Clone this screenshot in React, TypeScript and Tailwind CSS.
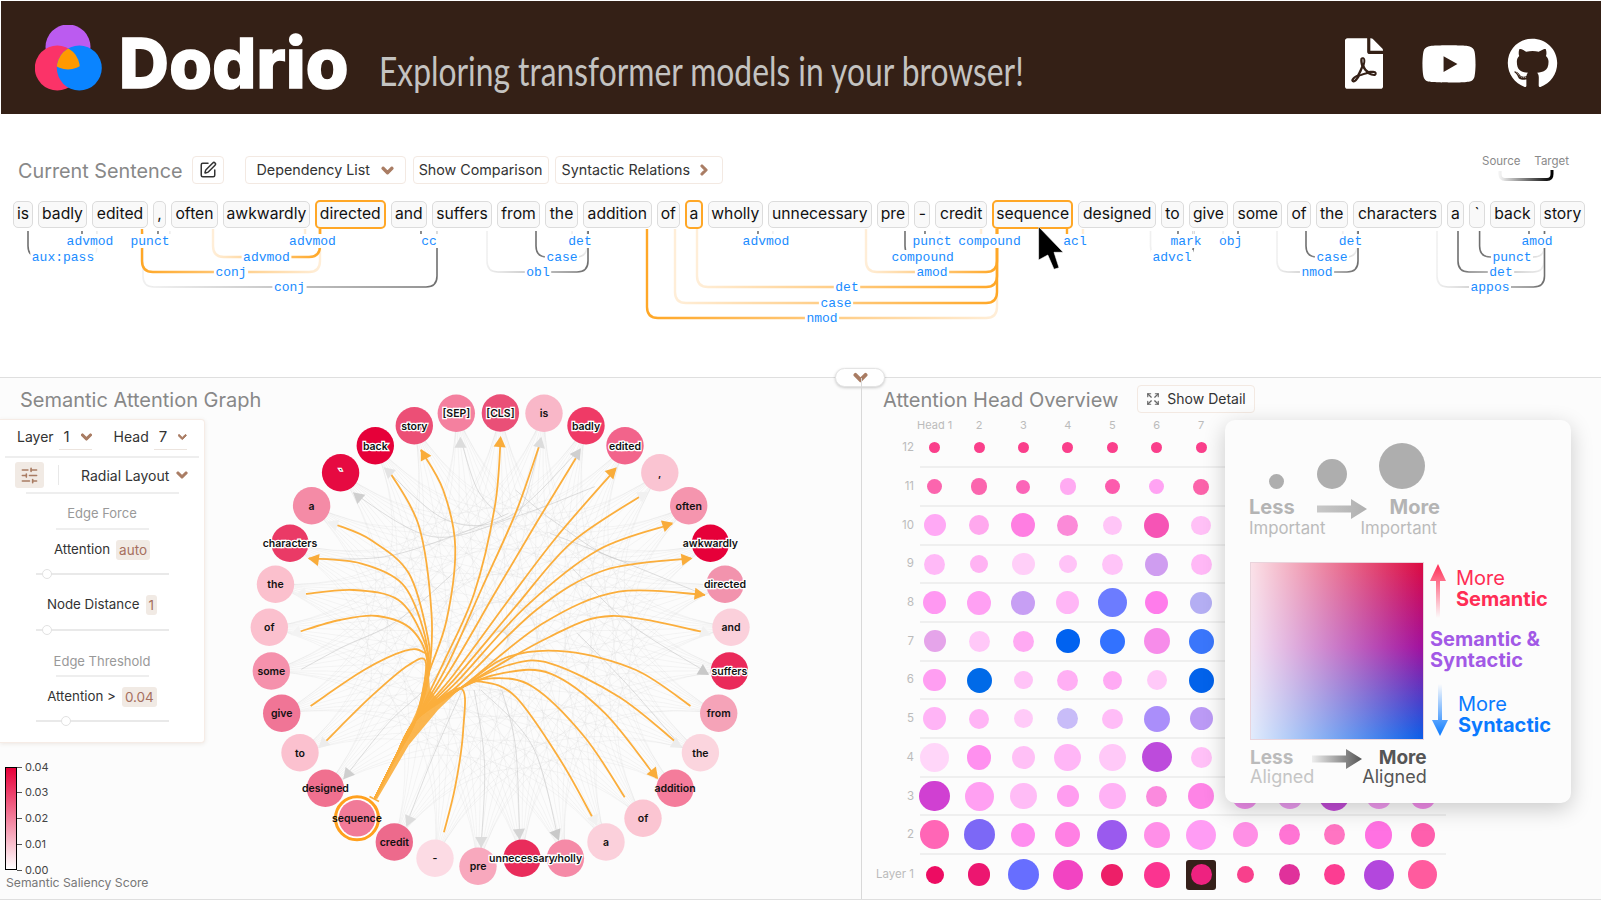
import { ReactNode } from 'react';
import { FaFilePdf, FaYoutube, FaGithub, FaChevronDown, FaChevronRight } from 'react-icons/fa';
import { SquarePen, SlidersHorizontal, Expand } from 'lucide-react';

type Pt = [number, number];

// text, box width, selected
const tokens: [string, number, boolean?][] = [
    ['is', 20], ['badly', 49], ['edited', 56], [',', 13], ['often', 47], ['awkwardly', 87], ['directed', 70.5, true], ['and', 36.5], ['suffers', 60], ['from', 43],
    ['the', 33], ['addition', 68.6], ['of', 23.4], ['a', 17.6, true], ['wholly', 55.4], ['unnecessary', 103.6], ['pre', 32.8], ['-', 16], ['credit', 51.6], ['sequence', 81.5, true],
    ['designed', 77.5], ['to', 23], ['give', 39], ['some', 49.5], ['of', 23.1], ['the', 32.4], ['characters', 89], ['a', 17], ['`', 16], ['back', 45], ['story', 45],
];

// x1, x2, level y, label, label centre, kind, dark end
type Arc = [number, number, number, string, number, 'o' | 'g', 'l' | 'r'];
const arcs: Arc[] = [
    [28, 97, 257, 'aux:pass', 63, 'g', 'l'],
    [82, 97, 241, 'advmod', 90, 'g', 'l'],
    [158, 170, 241, 'punct', 150, 'g', 'l'],
    [143, 437, 287, 'conj', 289.5, 'g', 'r'],
    [142, 320, 272, 'conj', 231, 'o', 'l'],
    [213, 320, 257, 'advmod', 266.5, 'o', 'r'],
    [305, 320, 241, 'advmod', 312.5, 'o', 'r'],
    [421, 437, 241, 'cc', 429, 'g', 'l'],
    [572, 588, 241, 'det', 580, 'g', 'r'],
    [536, 587, 257, 'case', 562, 'g', 'l'],
    [487, 588, 272, 'obl', 538, 'g', 'r'],
    [647, 997, 318, 'nmod', 822, 'o', 'l'],
    [675, 997, 303, 'case', 836, 'o', 'r'],
    [697, 997, 287, 'det', 847, 'o', 'r'],
    [758, 773, 241, 'advmod', 766, 'g', 'l'],
    [866, 997, 272, 'amod', 932, 'o', 'r'],
    [905, 940, 257, 'compound', 922.6, 'g', 'l'],
    [925, 940, 241, 'punct', 932, 'g', 'l'],
    [981, 997, 241, 'compound', 989.5, 'o', 'r'],
    [1067, 1083, 241, 'acl', 1075, 'o', 'l'],
    [1150.5, 1193.5, 257, 'advcl', 1172, 'g', 'r'],
    [1178, 1193.5, 241, 'mark', 1186, 'g', 'l'],
    [1223, 1238, 241, 'obj', 1230.7, 'g', 'r'],
    [1342.7, 1358, 241, 'det', 1350.5, 'g', 'r'],
    [1306, 1357, 257, 'case', 1332, 'g', 'l'],
    [1277, 1358, 272, 'nmod', 1317, 'g', 'r'],
    [1529, 1544.5, 241, 'amod', 1537, 'g', 'l'],
    [1479.6, 1544.5, 257, 'punct', 1512, 'g', 'l'],
    [1458, 1544, 272, 'det', 1501, 'g', 'l'],
    [1437, 1544.5, 287, 'appos', 1490, 'g', 'r'],
];

const DependencyArcs = () => (
    <svg viewBox="0 228 1601 100" className="block w-[1601px] h-[100px] overflow-visible">
        <defs>
            {arcs.map((a, i) => {
                const dark = a[5] === 'o' ? '#ffa726' : '#6f6f6f';
                const light = a[5] === 'o' ? '#ffeed8' : '#f0f0f0';
                return (
                    <linearGradient key={i} id={`arc${i}`} gradientUnits="userSpaceOnUse" x1={a[0]} x2={a[1]} y1="0" y2="0">
                        <stop offset="0" stopColor={a[6] === 'l' ? dark : light} />
                        <stop offset="1" stopColor={a[6] === 'l' ? light : dark} />
                    </linearGradient>
                );
            })}
        </defs>
        {arcs.map((a, i) => {
            const r = a[2] === 241 ? 5 : 11;
            const top = a[5] === 'o' ? 229 : 231;
            return (
                <path
                    key={i}
                    d={`M${a[0]} ${top}V${a[2] - r}Q${a[0]} ${a[2]} ${a[0] + r} ${a[2]}H${a[1] - r}Q${a[1]} ${a[2]} ${a[1]} ${a[2] - r}V${top}`}
                    fill="none"
                    stroke={`url(#arc${i})`}
                    strokeWidth={a[5] === 'o' ? 2.4 : 1.6}
                />
            );
        })}
        {arcs.map((a, i) => {
            const w = a[3].length * 7.8 + 3;
            return (
                <g key={i}>
                    <rect x={a[4] - w / 2} y={a[2] - 7} width={w} height={14} fill="#fff" />
                    <text x={a[4]} y={a[2] + 4} textAnchor="middle" fontSize="13" fontFamily="'Liberation Mono', monospace" fill="#1a8cff">{a[3]}</text>
                </g>
            );
        })}
        <path d="M1038.6 226.7V260L1047.8 255L1054 269.3L1059 267.7L1054 252.3H1063.2Z" fill="#000" stroke="#fff" strokeWidth="0.6" />
    </svg>
);

// graph coordinates are read off a 2.9 x 3 crop, zp maps them to the page
const zp = (p: Pt): Pt => [240 + p[0] / 2.9037, 380 + p[1] / 3];

const smooth = (raw: Pt[]) => {
    const pts = raw.map(zp);
    let d = `M${pts[0][0].toFixed(1)} ${pts[0][1].toFixed(1)}`;
    for (let i = 0; i < pts.length - 1; i++) {
        const p0 = pts[i - 1] || pts[i];
        const p1 = pts[i];
        const p2 = pts[i + 1];
        const p3 = pts[i + 2] || p2;
        d += `C${(p1[0] + (p2[0] - p0[0]) / 6).toFixed(1)} ${(p1[1] + (p2[1] - p0[1]) / 6).toFixed(1)} ${(p2[0] - (p3[0] - p1[0]) / 6).toFixed(1)} ${(p2[1] - (p3[1] - p1[1]) / 6).toFixed(1)} ${p2[0].toFixed(1)} ${p2[1].toFixed(1)}`;
    }
    return d;
};

const tip = (from: Pt, to: Pt, size = 11) => {
    const a = zp(from);
    const b = zp(to);
    const len = Math.hypot(b[0] - a[0], b[1] - a[1]) || 1;
    const ux = (b[0] - a[0]) / len;
    const uy = (b[1] - a[1]) / len;
    const bx = b[0] - ux * size;
    const by = b[1] - uy * size;
    return `${b[0].toFixed(1)},${b[1].toFixed(1)} ${(bx - uy * size * 0.55).toFixed(1)},${(by + ux * size * 0.55).toFixed(1)} ${(bx + uy * size * 0.55).toFixed(1)},${(by - ux * size * 0.55).toFixed(1)}`;
};

const nodes: [string, number, number, string, boolean?][] = [
    ['[SEP]', 456.3, 413.3, '#f4809f', true], ['[CLS]', 500.4, 413, '#ea4f77', true], ['is', 544, 413.3, '#f9b7c8'],
    ['badly', 586, 425.7, '#ef3a66', true], ['edited', 625, 445.7, '#f2648b', true], [',', 659.8, 472.7, '#fac4d2'],
    ['often', 688.7, 505.7, '#f595ae'], ['awkwardly', 710.4, 543.3, '#e60039', true], ['directed', 725, 584.3, '#f293ad', true],
    ['and', 731, 627.3, '#fbd0db'], ['suffers', 729.4, 671, '#ea2a5a', true], ['from', 718.7, 713.3, '#f5a3b8'],
    ['the', 700.4, 752.7, '#fbd5de'], ['addition', 675, 788.3, '#f47c9b'], ['of', 643, 818.3, '#fbc5d2'],
    ['a', 606, 842, '#fbd0db'], ['wholly', 565.4, 858.3, '#f58aa7', true], ['unnecessary', 522, 858.3, '#e92c5b', true],
    ['pre', 478, 866.3, '#f8a8bd'], ['-', 435, 858.3, '#fcdbe4'], ['credit', 394.3, 842, '#ed6a8c'],
    ['designed', 325.4, 788.3, '#f0708f'], ['to', 300, 752.7, '#fbc1cf'], ['give', 281.7, 713.3, '#f07596'],
    ['some', 271.3, 671, '#f591ac'], ['of', 269.3, 627.3, '#fbc0ce'], ['the', 275.5, 584.3, '#fbc0cd'],
    ['characters', 290, 543.3, '#ea3a66', true], ['a', 311.6, 505.7, '#f48ba6'], ['`', 340.6, 472.7, '#e60a41', true],
    ['back', 375.3, 445.7, '#e60039', true], ['story', 414.3, 425.7, '#ec4f76', true],
];

const S: Pt = [392, 1255];
const T1: Pt = [450, 1135];
const T2: Pt = [510, 1020];
const L: Pt = [548, 880];
const R: Pt = [640, 925];

const orange: Pt[][] = [
    [S, T1, T2, L, [600, 720], [625, 500], [590, 330], [525, 210]],
    [S, T1, T2, L, [556, 700], [520, 440], [437, 280]],
    [S, T1, T2, L, [545, 770], [490, 580], [380, 480], [282, 435]],
    [S, T1, T2, L, [530, 740], [470, 610], [350, 550], [200, 535]],
    [S, T1, T2, L, [530, 770], [460, 660], [330, 630], [190, 642]],
    [S, T1, T2, [545, 860], [500, 750], [400, 708], [290, 720], [172, 755]],
    [S, T1, T2, [545, 850], [530, 815], [480, 812], [360, 870], [205, 978]],
    [S, T1, T2, [540, 850], [490, 855], [380, 950], [248, 1085]],
    [S, T1, T2, [590, 850], [680, 640], [740, 380], [757, 175]],
    [S, T1, T2, [600, 860], [700, 630], [800, 400], [868, 200]],
    [S, T1, T2, [610, 870], [740, 640], [860, 430], [975, 235]],
    [S, T1, T2, [620, 885], [780, 660], [920, 470], [1090, 268]],
    [S, T1, T2, [625, 895], [800, 680], [960, 490], [1160, 350]],
    [S, T1, T2, [630, 905], [830, 680], [1040, 510], [1255, 432]],
    [S, T1, T2, [635, 915], [860, 690], [1060, 570], [1310, 535]],
    [S, T1, T2, R, [880, 730], [1100, 635], [1350, 645]],
    [S, T1, T2, R, [900, 770], [1080, 708], [1340, 755]],
    [S, T1, T2, R, [780, 830], [950, 815], [1150, 870], [1308, 978]],
    [S, T1, T2, R, [780, 855], [900, 850], [1100, 950], [1262, 1083]],
    [S, T1, T2, R, [760, 880], [900, 880], [1060, 1000], [1210, 1195]],
    [S, T1, T2, R, [730, 895], [850, 920], [1000, 1070], [1117, 1252]],
    [S, T1, T2, R, [700, 905], [800, 950], [930, 1140], [1025, 1315]],
    [S, T1, T2, R, [648, 1050], [625, 1220], [592, 1357]],
];

// arrow heads: tail, tip, colour
const arrows: [Pt, Pt, string][] = [
    [[590, 330], [525, 207], '#f9ac3a'],
    [[745, 300], [757, 168], '#f9ac3a'],
    [[1040, 318], [1094, 262], '#f9ac3a'],
    [[1150, 465], [1258, 428], '#f9ac3a'],
    [[1200, 550], [1314, 535], '#f9ac3a'],
    [[1240, 632], [1352, 645], '#f9ac3a'],
    [[300, 550], [197, 535], '#f9ac3a'],
    [[1130, 1090], [1214, 1197], '#f9ac3a'],
    [[460, 300], [417, 262], '#e4e4e4'],
    [[280, 435], [253, 425], '#f1f1f1'],
    [[400, 400], [328, 337], '#cfcfcf'],
    [[190, 640], [160, 645], '#f3f3f3'],
    [[172, 755], [146, 765], '#f3f3f3'],
    [[248, 1085], [228, 1105], '#ececec'],
    [[640, 290], [640, 170], '#dcdcdc'],
    [[860, 240], [875, 170], '#dcdcdc'],
    [[940, 280], [990, 205], '#cfcfcf'],
    [[1130, 370], [1186, 335], '#f1f1f1'],
    [[1340, 755], [1368, 766], '#f1f1f1'],
    [[1260, 820], [1362, 885], '#c9c9c9'],
    [[1240, 1075], [1284, 1104], '#ececec'],
    [[1020, 1300], [1037, 1338], '#f1f1f1'],
    [[880, 1260], [926, 1382], '#c9c9c9'],
    [[805, 1270], [812, 1380], '#d4d4d4'],
    [[702, 1300], [700, 1404], '#dcdcdc'],
    [[520, 1250], [483, 1340], '#dcdcdc'],
    [[370, 1110], [300, 1198], '#cfcfcf'],
];

const greyLines: Pt[][] = [
    [[330, 340], [560, 470], [800, 410], [1030, 320]],
    [[420, 265], [600, 420], [780, 410], [980, 215]],
    [[640, 175], [690, 330], [760, 410]],
    [[875, 175], [830, 350], [800, 420]],
    [[200, 535], [420, 530], [640, 460], [780, 400]],
    [[1300, 535], [1100, 540], [920, 430], [800, 330]],
    [[1350, 645], [1100, 540], [900, 460]],
    [[1360, 880], [1130, 730], [960, 560]],
    [[178, 868], [300, 800], [460, 720], [640, 560]],
    [[300, 1198], [430, 1030], [560, 900], [680, 700]],
    [[483, 1335], [560, 1130], [650, 920]],
    [[700, 1404], [710, 1150], [680, 930]],
    [[812, 1380], [800, 1100], [760, 930]],
    [[925, 1380], [850, 1100], [700, 930]],
    [[1284, 1104], [1130, 920], [980, 760]],
];

const cx = 500;
const cy = 640;
const allEdges: string[] = [];
nodes.forEach((a, i) => {
    nodes.forEach((b, j) => {
        if (j <= i || j - i < 5 || nodes.length - (j - i) < 5) return;
        if ((i * 7 + j * 13) % 2 !== 0) return;
        const mx = cx + ((a[1] + b[1]) / 2 - cx) * 0.35;
        const my = cy + ((a[2] + b[2]) / 2 - cy) * 0.35;
        allEdges.push(`M${a[1]} ${a[2]}Q${mx.toFixed(1)} ${my.toFixed(1)} ${b[1]} ${b[2]}`);
    });
});

const trunk = [[392, 1255], [470, 1090], [510, 1000], [535, 930], [548, 880], [552, 930], [575, 960], [640, 925], [575, 990], [490, 1095], [398, 1258]]
    .map((p) => zp(p as Pt).map((v) => v.toFixed(1)).join(','))
    .join(' ');

const AttentionGraph = () => (
    <svg viewBox="240 380 540 521" className="block w-[540px] h-[521px] overflow-visible">
        {allEdges.map((d, i) => (
            <path key={i} d={d} fill="none" stroke="#c4c4c4" strokeWidth="0.7" opacity="0.22" />
        ))}
        {greyLines.map((p, i) => (
            <path key={i} d={smooth(p)} fill="none" stroke="#c8c8c8" strokeWidth="1" opacity="0.6" />
        ))}
        {orange.map((p, i) => (
            <path key={i} d={smooth(p)} fill="none" stroke="#fbae3c" strokeWidth={1.8} />
        ))}
        <polygon points={trunk} fill="#fbae3c" opacity="0.9" />
        {arrows.map((a, i) => (
            <polygon key={i} points={tip(a[0], a[1])} fill={a[2]} />
        ))}
        <path d="M369.5 796.5L379 801.5" stroke="#fbae3c" strokeWidth="1.5" />
        {nodes.map((n) => (
            <circle key={n[0] + n[1]} cx={n[1]} cy={n[2]} r="18.7" fill={n[3]} />
        ))}
        <circle cx="357" cy="818.3" r="21.5" fill="#fff" stroke="#ffa01e" strokeWidth="3" />
        <circle cx="357" cy="818.3" r="18.3" fill="#f17a98" />
        {nodes.map((n) => (
            <text
                key={n[0] + n[1]}
                x={n[1]}
                y={n[2] + 4}
                textAnchor="middle"
                fontSize="10.5"
                fontWeight="600"
                fontFamily="Inter, sans-serif"
                fill="#111"
                stroke={n[4] ? '#fff' : 'none'}
                strokeWidth={n[4] ? 2.5 : 0}
                paintOrder="stroke"
            >
                {n[0]}
            </text>
        ))}
        <text x="357" y="822.3" textAnchor="middle" fontSize="10.5" fontWeight="600" fontFamily="Inter, sans-serif" fill="#111">sequence</text>
    </svg>
);

const Logo = () => (
    <svg viewBox="0 0 80 80" className="w-[80px] h-[80px] shrink-0">
        <defs>
            <clipPath id="cp"><circle cx="33" cy="22" r="22.5" /></clipPath>
            <clipPath id="cr"><circle cx="22.3" cy="43" r="22.5" /></clipPath>
        </defs>
        <circle cx="33" cy="22" r="22.5" fill="#bb5bf0" />
        <circle cx="22.3" cy="43" r="22.5" fill="#fb3368" />
        <circle cx="44.3" cy="43" r="22.5" fill="#0a84ff" />
        <g clipPath="url(#cp)">
            <g clipPath="url(#cr)">
                <circle cx="44.3" cy="43" r="22.5" fill="#ff9900" />
            </g>
        </g>
    </svg>
);

const Header = () => (
    <header className="mt-px ml-px h-[113px] bg-[#342016] flex items-center text-white">
        <div className="ml-[34px] translate-y-[7px]"><Logo /></div>
        <div className="ml-[4px] translate-y-[6px] font-['Inter',sans-serif] font-extrabold text-[69px] leading-none tracking-[0.3px] [-webkit-text-stroke:1.5px_white]">Dodrio</div>
        <div className="ml-[30px] translate-y-[13px] origin-left scale-x-[0.775] font-['Lato',sans-serif] text-[41px] leading-none text-[#c4c3c1] whitespace-nowrap">Exploring transformer models in your browser!</div>
        <div className="ml-auto flex items-center mr-[43px] translate-y-[6px]">
            <FaFilePdf className="w-[38px] h-[51px]" />
            <FaYoutube className="w-[56px] h-[56px] ml-[38px]" />
            <FaGithub className="w-[51px] h-[51px] ml-[30px]" />
        </div>
    </header>
);

const Chevron = ({ size, className }: { size: number; className?: string }) => (
    <FaChevronDown size={size} strokeWidth={50} className={`text-[#a97c63] ${className || ''}`} />
);

const TanButton = ({ children, className }: { children: ReactNode; className?: string }) => (
    <div className={`h-[28px] flex items-center border border-[#f3e9e2] rounded-[4px] text-[14.3px] text-[#333] whitespace-nowrap ${className || ''}`}>{children}</div>
);

const SentencePanel = () => (
    <section className="h-[263px] bg-white">
        <div className="h-[87px] flex items-start pt-[42px] pl-[18px] relative">
            <h2 className="text-[19.8px] leading-[30px] text-[#888] whitespace-nowrap">Current Sentence</h2>
            <TanButton className="ml-[9px] w-[32px] justify-center text-[#333]"><SquarePen size={18} /></TanButton>
            <TanButton className="ml-[21px] w-[161px] pl-[11px]">Dependency List<Chevron size={13} className="ml-[11px]" /></TanButton>
            <TanButton className="ml-[7px] w-[136px] justify-center">Show Comparison</TanButton>
            <TanButton className="ml-[6px] w-[168px] pl-[6px]">Syntactic Relations<FaChevronRight className="ml-[8px] text-[#a97c63]" size={12} strokeWidth={50} /></TanButton>
            <div className="ml-auto mr-[32px] mt-0 w-[87px] text-[11.5px] text-[#8a8a8a]">
                <div className="flex justify-between -mt-[3px]"><span>Source</span><span>Target</span></div>
                <svg viewBox="0 0 60 12" className="block ml-[14px] w-[60px] h-[12px]">
                    <defs><linearGradient id="srcTgt" x1="0" x2="1" y1="0" y2="0"><stop offset="0" stopColor="#f2f2f2" /><stop offset="1" stopColor="#000" /></linearGradient></defs>
                    <path d="M4 1V4Q4 9.5 9 9.5H51Q56 9.5 56 4V0" fill="none" stroke="url(#srcTgt)" strokeWidth="3" />
                </svg>
            </div>
        </div>
        <div className="flex items-center gap-[5px] ml-[13px] h-[27px]">
            {tokens.map((t, i) => (
                <div
                    key={i}
                    style={{ width: t[1] }}
                    className={t[2]
                        ? 'h-[29px] pb-px flex items-center justify-center shrink-0 rounded-[5px] border-2 border-[#ffa726] bg-[#f9f9f9] text-[15.7px] text-[#111]'
                        : 'h-[27px] pb-px flex items-center justify-center shrink-0 rounded-[5px] border border-[#dcdcdc] bg-[#f9f9f9] text-[15.7px] text-[#111]'}
                >
                    {t[0]}
                </div>
            ))}
        </div>
        <DependencyArcs />
    </section>
);

const Slider = ({ thumb }: { thumb: number }) => (
    <div className="relative ml-[36px] w-[133px] h-[2px] bg-[#e9e9e9]">
        <div className="absolute -top-[4px] w-[10px] h-[10px] rounded-full bg-white border border-[#e2e2e2]" style={{ left: thumb }} />
    </div>
);

const Tag = ({ children }: { children: ReactNode }) => (
    <span className="ml-[6px] px-[3px] h-[20px] flex items-center rounded-[3px] bg-[#f1eae4] text-[#a66f5e] text-[13.5px]">{children}</span>
);

const ControlPanel = () => (
    <div className="w-[205px] h-[324px] bg-white border border-l-0 border-[#f6ece6] rounded-r-[4px] shadow-[0_1px_4px_rgba(120,80,50,0.12)] text-[13.3px] text-[#333]">
        <div className="h-[36px] flex items-center pl-[17px] pb-[4px] text-[14px]">
            <span>Layer</span>
            <span className="ml-[5px] w-[33px] h-[25px] pl-[5px] flex items-center border-b border-[#ece4de] mt-[3px] text-[15px]">1<Chevron size={12} className="ml-[11px]" /></span>
            <span className="ml-[22px]">Head</span>
            <span className="ml-[5px] w-[33px] h-[25px] pl-[5px] flex items-center border-b border-[#ece4de] mt-[3px] text-[15px]">7<Chevron size={12} className="ml-[11px]" /></span>
        </div>
        <div className="mx-[5px] h-[2px] bg-[#eeeeee]" />
        <div className="h-[34px] flex items-center pl-[15px] text-[14px]">
            <span className="w-[29px] h-[26px] flex items-center justify-center bg-[#f1eae4] rounded-[3px] text-[#a97c63]"><SlidersHorizontal size={19} /></span>
            <span className="ml-[14px] w-px h-[20px] bg-[#e8e8e8]" />
            <span className="ml-[22px]">Radial Layout</span>
            <Chevron size={12} className="ml-[7px]" />
        </div>
        <div className="mx-[26px] w-[153px] h-[2px] bg-[#eeeeee]" />
        <div className="h-[34px] pt-[5px] flex items-center justify-center text-[#999] text-[13px]">Edge Force</div>
        <div className="ml-[56px] w-[93px] h-[2px] bg-[#eeeeee]" />
        <div className="mt-[10px] flex items-center justify-center h-[20px]"><span>Attention</span><Tag>auto</Tag></div>
        <div className="mt-[13px]"><Slider thumb={6} /></div>
        <div className="mt-[20px] flex items-center justify-center h-[20px]"><span>Node Distance</span><Tag>1</Tag></div>
        <div className="mt-[14px]"><Slider thumb={6} /></div>
        <div className="mt-[19px] h-[24px] flex items-center justify-center text-[#999] text-[13px]">Edge Threshold</div>
        <div className="mt-px ml-[56px] w-[93px] h-[2px] bg-[#eeeeee]" />
        <div className="mt-[10px] flex items-center justify-center h-[20px]"><span>Attention &gt;</span><Tag>0.04</Tag></div>
        <div className="mt-[13px]"><Slider thumb={25} /></div>
    </div>
);

const SaliencyLegend = () => (
    <div className="mt-[24px] ml-[5px] text-[11px] leading-none text-[#444]">
        <div className="flex">
            <div className="w-[12px] h-[103px] border border-black bg-[linear-gradient(to_bottom,#e60039,#fff)]" />
            <div className="h-[114px] -mt-[5.5px] flex flex-col justify-between">
                {['0.04', '0.03', '0.02', '0.01', '0.00'].map((v) => (
                    <div key={v} className="flex items-center h-[11px]">
                        <span className="w-[5px] h-px bg-[#555] mr-[3px]" />{v}
                    </div>
                ))}
            </div>
        </div>
        <div className="-mt-[1px] ml-px text-[12.2px] leading-[15px] text-[#777] whitespace-nowrap">Semantic Saliency Score</div>
    </div>
);

type Dot = [number, string];
const rows: { label: string; dots: Dot[] }[] = [
    { label: '12', dots: [[11, '#fa3f8b'], [11, '#fa3f8b'], [11, '#fa3f8b'], [11, '#fa3f8b'], [11, '#fa3f8b'], [11, '#fa3f8b'], [11, '#fa3f8b']] },
    { label: '11', dots: [[15, '#fb65ae'], [16.7, '#fb65ae'], [14, '#fb65b8'], [16.7, '#ffaaf2'], [15.5, '#fc5bad'], [15.5, '#ffa3f3'], [16, '#fb63aa']] },
    { label: '10', dots: [[22, '#ffa9f5'], [20, '#ffa8ee'], [24, '#ff7ee2'], [21, '#fb8ad8'], [19.5, '#ffc5f7'], [25, '#f654b5'], [19.5, '#ffc0f6']] },
    { label: '9', dots: [[21, '#ffb9f7'], [18.7, '#ffb3f3'], [22.5, '#ffcff8'], [18.7, '#ffc3f7'], [21, '#ffc4f8'], [23, '#cf9df0'], [21, '#ffb8f6']] },
    { label: '8', dots: [[23, '#ff98f2'], [24, '#ffa0f3'], [24, '#c79ff4'], [23, '#ffb6f6'], [29, '#6c7cff'], [23, '#ff7ceb'], [22, '#b4aef3']] },
    { label: '7', dots: [[22, '#e5a4ea'], [21, '#ffc8f8'], [21, '#ffaaf3'], [24, '#0062f0'], [25, '#3272ff'], [26, '#f78cea'], [25, '#3a76fb']] },
    { label: '6', dots: [[22.5, '#ff9ef2'], [25, '#006ae8'], [18.5, '#ffc3f7'], [21, '#ffaff4'], [19, '#ffaaf4'], [20, '#ffc9f8'], [25, '#0262ea']] },
    { label: '5', dots: [[23, '#ffb4f6'], [20, '#ffb4f5'], [19, '#ffcaf8'], [21, '#c8bcf8'], [20.5, '#ffbcf7'], [26, '#aa8efa'], [23, '#bb9af5']] },
    { label: '4', dots: [[29, '#ffd6f9'], [24.5, '#ff90ef'], [23, '#ffc0f6'], [27, '#ffb6f6'], [27.5, '#ffc9f8'], [30, '#bd4bdc'], [21, '#ffc0f7']] },
    { label: '3', dots: [[30.5, '#d040d2'], [29, '#ffa0f2'], [26.5, '#ffbcf6'], [22, '#ff9df0'], [26.5, '#ffb2f5'], [21, '#fb8ade'], [26, '#fe84e6'], [26, '#f08fec'], [26, '#ea9bee'], [30, '#c04bd4'], [26, '#f099ee'], [26, '#f08ce8']] },
    { label: '2', dots: [[29, '#ff66b6'], [31, '#7c68f6'], [24, '#ff8eef'], [25, '#ff80e4'], [30, '#9a5aee'], [26, '#ff8fe8'], [30, '#ff9cf4'], [25, '#ff90e6'], [21, '#ff74d4'], [21, '#ff74c2'], [27.5, '#ff71e2'], [24.5, '#fe5fad']] },
    { label: 'Layer 1', dots: [[18, '#ed0c62'], [22.5, '#ec1670'], [30.5, '#676eff'], [30, '#f244c2'], [22, '#ed1f68'], [26, '#fb3490'], [21, '#ee2280'], [17, '#f8408c'], [21, '#e0319b'], [21, '#fc3d92'], [30, '#b347dd'], [29, '#ff5b9e']] },
];

const LegendArrow = ({ from, to, id }: { from: string; to: string; id: string }) => (
    <svg viewBox="0 0 50 20" className="w-[50px] h-[20px] block">
        <defs>
            <linearGradient id={id} x1="0" x2="1" y1="0" y2="0">
                <stop offset="0" stopColor={from} />
                <stop offset="1" stopColor={to} />
            </linearGradient>
        </defs>
        <path d="M0 6.5H34V0L50 10L34 20V13.5H0Z" fill={`url(#${id})`} />
    </svg>
);

const LegendCard = () => (
    <div className="absolute left-[363px] top-[42px] w-[346px] h-[383px] bg-[#fcfcfc] rounded-[10px] shadow-[0_6px_22px_rgba(0,0,0,0.2)] pl-[24px]">
        <div className="h-[86px]">
            <div className="flex items-end h-[71px] pt-[25px]">
                <span className="ml-[20px] mb-[2px] w-[15px] h-[15px] rounded-full bg-[#aeaeae]" />
                <span className="ml-[33px] mb-[2px] w-[30px] h-[30px] rounded-full bg-[#aeaeae]" />
                <span className="ml-[32px] mb-[2px] w-[46px] h-[46px] rounded-full bg-[#aeaeae]" />
            </div>
        </div>
        <div className="-mt-[9px] flex items-start">
            <div className="w-[88px]">
                <div className="text-[20px] leading-[21px] font-bold text-[#b4b4b4]">Less</div>
                <div className="text-[16.8px] leading-[21px] text-[#bbb]">Important</div>
            </div>
            <div className="-ml-[20px] mt-[2px]"><LegendArrow id="imp" from="#c8c8c8" to="#b0b0b0" /></div>
            <div className="-ml-[22px] w-[92px] text-right">
                <div className="text-[20px] leading-[21px] font-bold text-[#b4b4b4] mr-[-3px]">More</div>
                <div className="text-[16.8px] leading-[21px] text-[#bbb]">Important</div>
            </div>
        </div>
        <div className="mt-[23px] flex">
            <div className="ml-px w-[174px] h-[178px] bg-[linear-gradient(to_right,rgba(255,255,255,0.88),rgba(255,255,255,0)),linear-gradient(to_bottom,#dc0a40,#a0109e_48%,#0a5ee8)] border border-[#e9d4dc]" />
            <div className="ml-[6px] flex flex-col h-[176px] w-[124px]">
                <div className="flex">
                    <svg viewBox="0 0 16 54" className="w-[16px] h-[54px] shrink-0 mt-[2px]">
                        <defs><linearGradient id="up" x1="0" x2="0" y1="1" y2="0"><stop offset="0" stopColor="#ff2d55" stopOpacity="0" /><stop offset="1" stopColor="#ff2d55" /></linearGradient></defs>
                        <path d="M8 0L16 17H10V54H6V17H0Z" fill="url(#up)" />
                    </svg>
                    <div className="ml-[10px] mt-[6px] text-[#ff2d55] text-[20px] leading-[21px]">More<div className="font-bold">Semantic</div></div>
                </div>
                <div className="mt-[11px] text-[#a259e6] font-bold text-[20px] leading-[21px] whitespace-nowrap">Semantic &amp;<br />Syntactic</div>
                <div className="flex mt-[13px]">
                    <svg viewBox="0 0 16 52" className="w-[16px] h-[52px] shrink-0 ml-[2px]">
                        <defs><linearGradient id="down" x1="0" x2="0" y1="0" y2="1"><stop offset="0" stopColor="#0a7aff" stopOpacity="0" /><stop offset="1" stopColor="#0a7aff" /></linearGradient></defs>
                        <path d="M6 0H10V36H16L8 52L0 36H6Z" fill="url(#down)" />
                    </svg>
                    <div className="ml-[10px] mt-[10px] text-[#0a7aff] text-[20px] leading-[21px]">More<div className="font-bold">Syntactic</div></div>
                </div>
            </div>
        </div>
        <div className="mt-[8px] ml-px w-[174px] flex items-start">
            <div>
                <div className="text-[19px] leading-[19px] font-bold text-[#bbb]">Less</div>
                <div className="text-[18px] leading-[19px] text-[#c5c5c5]">Aligned</div>
            </div>
            <div className="-ml-[2px] mt-px"><LegendArrow id="ali" from="#eeeeee" to="#555555" /></div>
            <div className="ml-auto text-right">
                <div className="text-[19px] leading-[19px] font-bold text-[#555]">More</div>
                <div className="text-[18px] leading-[19px] text-[#555]">Aligned</div>
            </div>
        </div>
    </div>
);

const HeadOverview = () => (
    <div className="relative flex-1 border-l border-[#d9d9d9]">
        <div className="pt-[8px] pl-[21px] flex items-center h-[36px]">
            <h2 className="text-[20px] leading-[27px] text-[#888] whitespace-nowrap">Attention Head Overview</h2>
            <TanButton className="ml-[19px] -mt-[3px] w-[118px] pl-[8px] text-[14px]"><Expand size={14} className="mr-[7px] text-[#666]" />Show Detail</TanButton>
        </div>
        <div className="mt-[3px] ml-[50.5px] h-[16px] flex text-[11px] leading-[16px] text-[#bbb]">
            {['Head 1', '2', '3', '4', '5', '6', '7'].map((h) => (
                <div key={h} className="w-[44.4px] text-center whitespace-nowrap">{h}</div>
            ))}
        </div>
        <div className="-mt-[3.4px]">
            {rows.map((row, i) => (
                <div key={row.label} className={`ml-[57.5px] w-[526.5px] h-[38.7px] flex items-center ${i < rows.length - 1 ? 'border-b-2 border-[#efefef]' : ''}`}>
                    <div className="-ml-[57.5px] w-[52px] shrink-0 text-right text-[11.5px] text-[#bbb] whitespace-nowrap">{row.label}</div>
                    <div className="-ml-[1.5px] flex">
                        {row.dots.map((d, j) => (
                            <div key={j} className="w-[44.4px] h-[36px] flex items-center justify-center">
                                <div className={row.label === 'Layer 1' && j === 6 ? 'w-[30px] h-[30px] rounded-[3px] bg-[#35201a] flex items-center justify-center' : 'flex'}>
                                    <span className="block rounded-full" style={{ width: d[0], height: d[0], background: d[1] }} />
                                </div>
                            </div>
                        ))}
                    </div>
                </div>
            ))}
        </div>
        <LegendCard />
    </div>
);

export default function App() {
    return (
        <div className="w-[1601px] h-[901px] overflow-hidden bg-white font-['Inter',sans-serif]">
            <Header />
            <SentencePanel />
            <section className="relative h-[523px] flex bg-[#fcfcfc] border-t border-b border-[#dfdfdf]">
                <div className="absolute left-[835px] -top-[10px] w-[50px] h-[19px] rounded-full bg-white border border-[#e4e4e4] shadow-[0_1px_3px_rgba(0,0,0,0.2)] flex items-center justify-center">
                    <Chevron size={15} />
                </div>
                <div className="w-[861px] shrink-0 flex">
                    <div className="w-[205px] shrink-0">
                        <div className="h-[41px] pl-[20px] pt-[9px] text-[20px] leading-[27px] text-[#888] whitespace-nowrap">Semantic Attention Graph</div>
                        <ControlPanel />
                        <SaliencyLegend />
                    </div>
                    <div className="ml-[35px] mt-[2px]"><AttentionGraph /></div>
                </div>
                <HeadOverview />
            </section>
        </div>
    );
}
